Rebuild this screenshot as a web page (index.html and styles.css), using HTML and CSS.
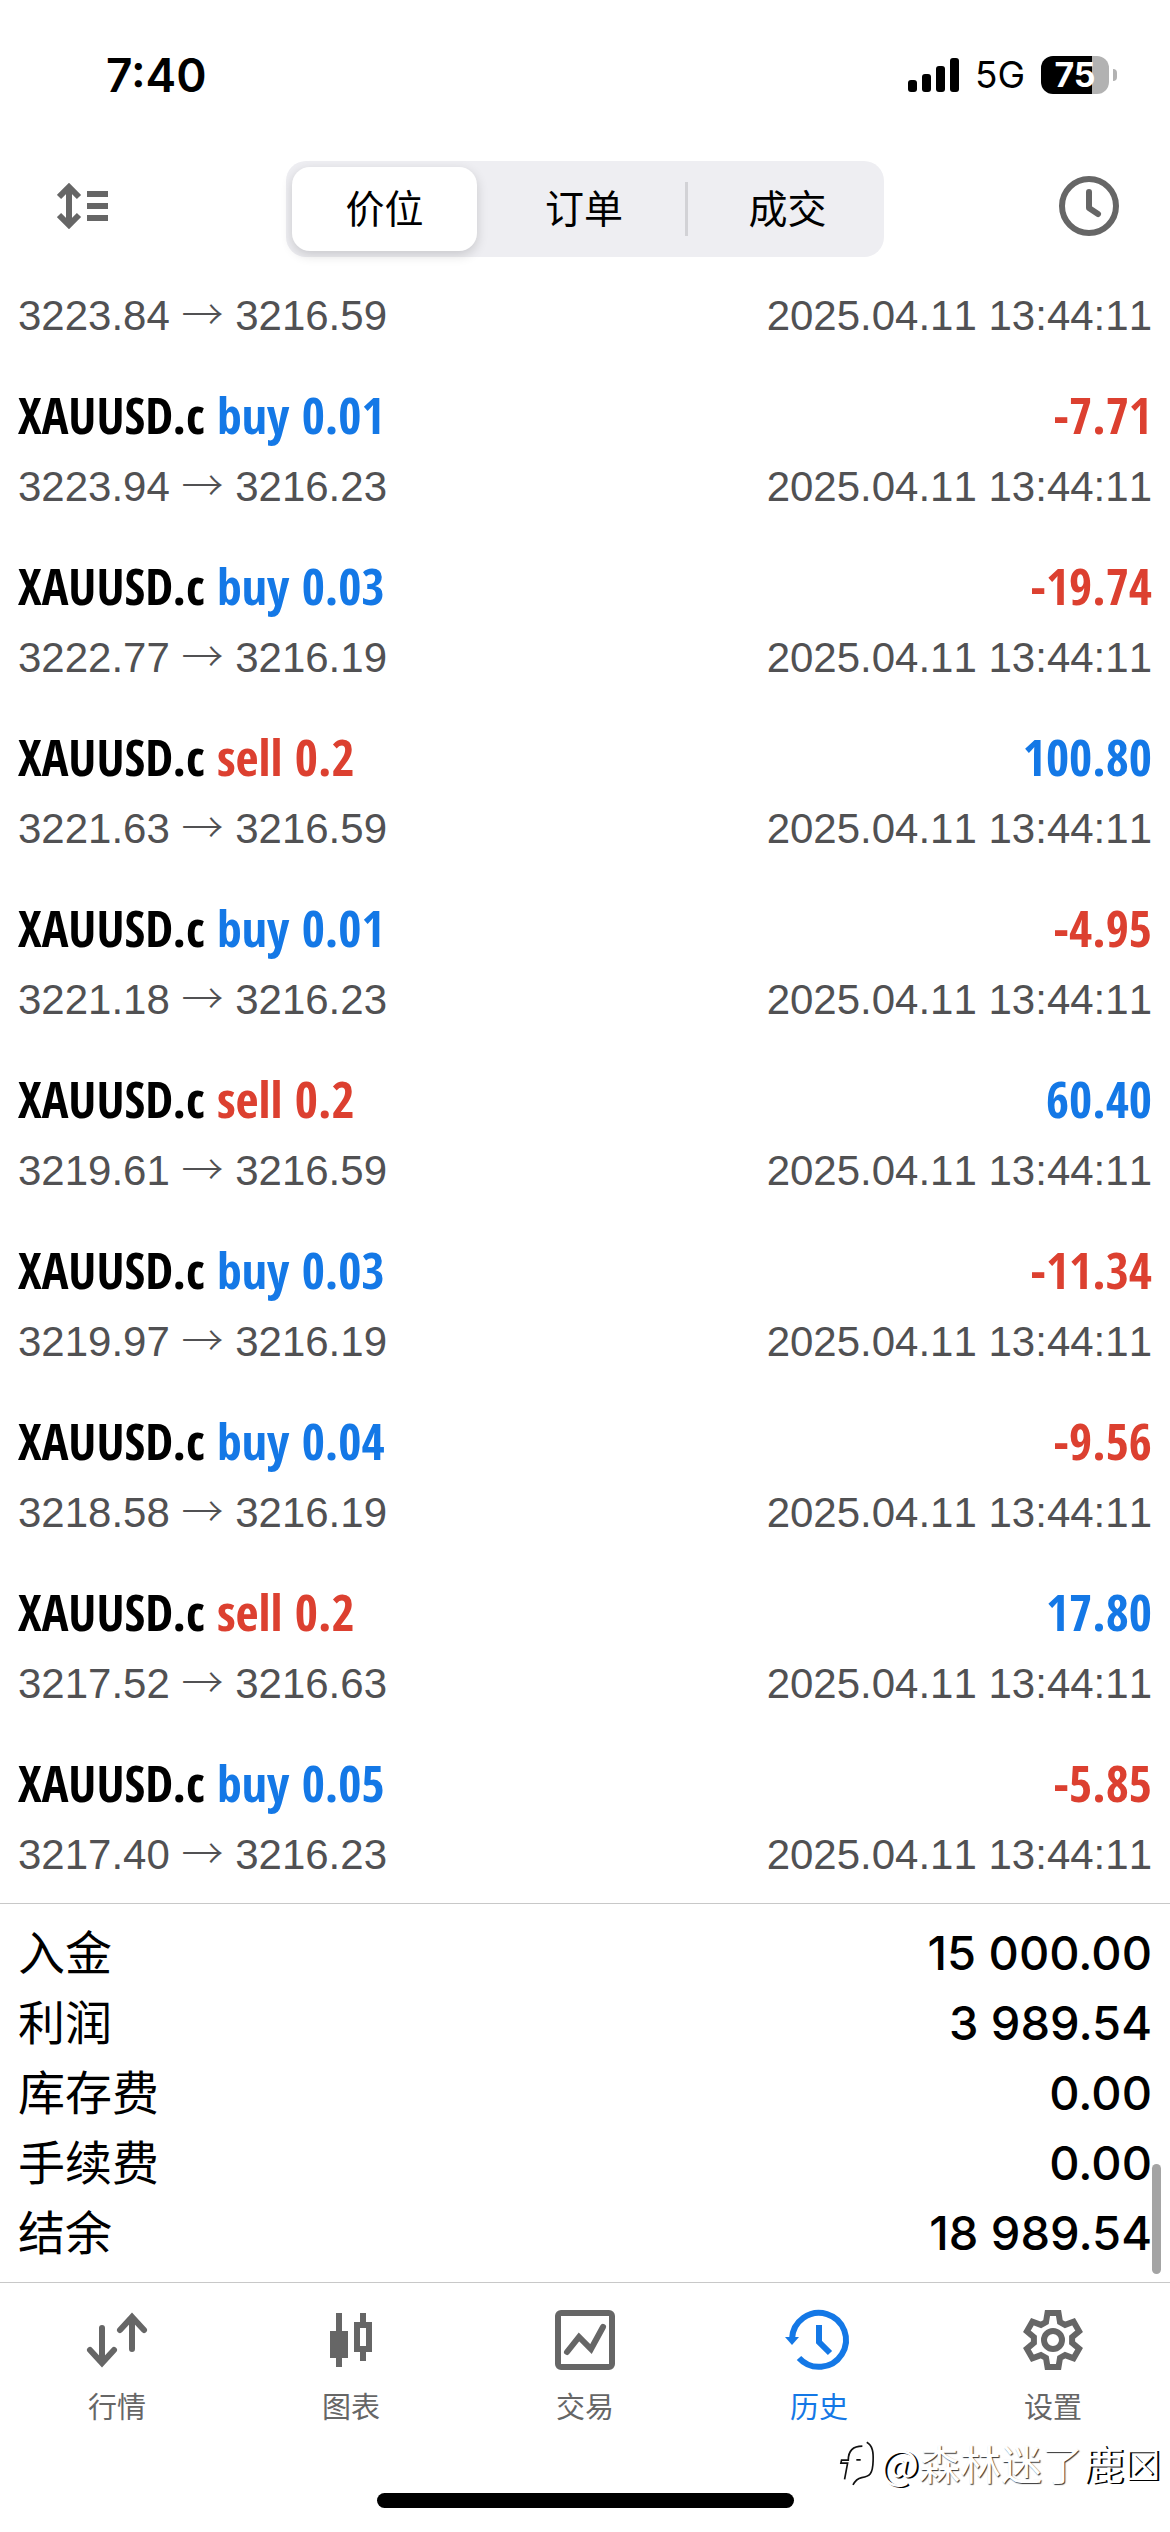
FILE: index.html
```html
<!DOCTYPE html>
<html lang="zh-CN">
<head>
<meta charset="utf-8">
<meta name="viewport" content="width=device-width">
<title>历史</title>
<link rel="stylesheet" href="styles.css">
</head>
<body>
<div class="app">
  <div class="status">
    <time class="clock">7:40</time>
    <div class="status-right">
      <svg class="signal" viewBox="0 0 51 34" aria-hidden="true">
        <rect x="0" y="22" width="9" height="12" rx="3"/>
        <rect x="14" y="16" width="9" height="18" rx="3"/>
        <rect x="28" y="8" width="9" height="26" rx="3"/>
        <rect x="42" y="0" width="9" height="34" rx="3"/>
      </svg>
      <span class="network">5G</span>
      <span class="battery">75</span>
      <span class="battery-tip"></span>
    </div>
  </div>

  <header class="toolbar">
    <button class="icon-button" type="button" aria-label="排序">
      <svg class="sort-icon" viewBox="0 0 51 46" aria-hidden="true">
        <path d="M12 5V41M2 14 12 4l10 10M2 32l10 10 10-10" fill="none" stroke="currentColor" stroke-width="6"/>
        <path d="M30 8h21v6H30zM30 20h21v6H30zM30 32h21v6H30z" fill="currentColor"/>
      </svg>
    </button>
    <div class="segments" role="tablist">
      <button class="segment selected" type="button" role="tab" aria-selected="true">价位</button>
      <button class="segment" type="button" role="tab" aria-selected="false">订单</button>
      <button class="segment divided" type="button" role="tab" aria-selected="false">成交</button>
    </div>
    <button class="icon-button end" type="button" aria-label="时间段">
      <svg class="icon" viewBox="0 0 60 60" fill="none" stroke="currentColor" stroke-width="6" aria-hidden="true">
        <circle cx="30" cy="30" r="27"/>
        <path d="M30 16v16l9 6" stroke-linecap="round" stroke-linejoin="round"/>
      </svg>
    </button>
  </header>

  <ul class="deals">
    <li class="deal"><div class="detail"><span>3223.84 <span class="arrow">→</span> 3216.59</span><time>2025.04.11 13:44:11</time></div></li>
    <li class="deal"><div class="title"><span>XAUUSD.c <span class="blue">buy 0.01</span></span><span class="red">-7.71</span></div><div class="detail"><span>3223.94 <span class="arrow">→</span> 3216.23</span><time>2025.04.11 13:44:11</time></div></li>
    <li class="deal"><div class="title"><span>XAUUSD.c <span class="blue">buy 0.03</span></span><span class="red">-19.74</span></div><div class="detail"><span>3222.77 <span class="arrow">→</span> 3216.19</span><time>2025.04.11 13:44:11</time></div></li>
    <li class="deal"><div class="title"><span>XAUUSD.c <span class="red">sell 0.2</span></span><span class="blue">100.80</span></div><div class="detail"><span>3221.63 <span class="arrow">→</span> 3216.59</span><time>2025.04.11 13:44:11</time></div></li>
    <li class="deal"><div class="title"><span>XAUUSD.c <span class="blue">buy 0.01</span></span><span class="red">-4.95</span></div><div class="detail"><span>3221.18 <span class="arrow">→</span> 3216.23</span><time>2025.04.11 13:44:11</time></div></li>
    <li class="deal"><div class="title"><span>XAUUSD.c <span class="red">sell 0.2</span></span><span class="blue">60.40</span></div><div class="detail"><span>3219.61 <span class="arrow">→</span> 3216.59</span><time>2025.04.11 13:44:11</time></div></li>
    <li class="deal"><div class="title"><span>XAUUSD.c <span class="blue">buy 0.03</span></span><span class="red">-11.34</span></div><div class="detail"><span>3219.97 <span class="arrow">→</span> 3216.19</span><time>2025.04.11 13:44:11</time></div></li>
    <li class="deal"><div class="title"><span>XAUUSD.c <span class="blue">buy 0.04</span></span><span class="red">-9.56</span></div><div class="detail"><span>3218.58 <span class="arrow">→</span> 3216.19</span><time>2025.04.11 13:44:11</time></div></li>
    <li class="deal"><div class="title"><span>XAUUSD.c <span class="red">sell 0.2</span></span><span class="blue">17.80</span></div><div class="detail"><span>3217.52 <span class="arrow">→</span> 3216.63</span><time>2025.04.11 13:44:11</time></div></li>
    <li class="deal"><div class="title"><span>XAUUSD.c <span class="blue">buy 0.05</span></span><span class="red">-5.85</span></div><div class="detail"><span>3217.40 <span class="arrow">→</span> 3216.23</span><time>2025.04.11 13:44:11</time></div></li>
  </ul>

  <dl class="summary">
    <div class="sum-row"><dt>入金</dt><dd>15 000.00</dd></div>
    <div class="sum-row"><dt>利润</dt><dd>3 989.54</dd></div>
    <div class="sum-row"><dt>库存费</dt><dd>0.00</dd></div>
    <div class="sum-row"><dt>手续费</dt><dd>0.00</dd></div>
    <div class="sum-row"><dt>结余</dt><dd>18 989.54</dd></div>
    <div class="scroll-thumb"></div>
  </dl>

  <nav class="tabs">
    <a class="tab" href="#quotes">
      <svg class="icon" viewBox="0 0 60 60" fill="none" stroke="currentColor" stroke-width="6" stroke-linecap="round" aria-hidden="true">
        <path d="M15 18v34M3 40l12 13 12-13M45 39V8M33 20 45 7l12 13"/>
      </svg>
      <span>行情</span>
    </a>
    <a class="tab" href="#chart">
      <svg class="icon" viewBox="0 0 60 60" fill="currentColor" aria-hidden="true">
        <path d="M15 3h6v18h6v27h-6v9h-6v-9H9V21h6z"/>
        <path fill-rule="evenodd" d="M39 3h6v9h6v30h-6v9h-6v-9h-6V12h6zM39 18v18h6V18z"/>
      </svg>
      <span>图表</span>
    </a>
    <a class="tab" href="#trade">
      <svg class="icon" viewBox="0 0 60 60" fill="none" stroke="currentColor" stroke-width="6" aria-hidden="true">
        <rect x="3" y="3" width="54" height="54" rx="3"/>
        <path d="M12 42l12-15 12 12 12-22" stroke-linecap="round"/>
      </svg>
      <span>交易</span>
    </a>
    <a class="tab active" href="#history" aria-current="page">
      <svg class="icon" viewBox="0 0 60 60" fill="none" stroke="currentColor" stroke-width="6" aria-hidden="true">
        <path d="M3 29A27 27 0 1 1 10 48M30 15v17l11 11"/>
        <path d="M-4 27h14l-7 8z" fill="currentColor" stroke="none"/>
      </svg>
      <span>历史</span>
    </a>
    <a class="tab" href="#settings">
      <svg class="icon" viewBox="-30 -30 60 60" fill="none" stroke="currentColor" stroke-width="6" aria-hidden="true">
        <circle r="9"/>
        <path d="M-7-18-5.500-27H5.500L7-18 12.100-15.100 20.600-18.300 26.100-8.700 19.100-2.900V2.900L26.100 8.700 20.600 18.300 12.100 15.100 7 18 5.500 27H-5.500L-7 18-12.100 15.100-20.600 18.300-26.100 8.700-19.100 2.900V-2.900L-26.100-8.700-20.600-18.300-12.100-15.100Z"/>
      </svg>
      <span>设置</span>
    </a>
  </nav>
  <div class="home-bar"></div>

  <div class="watermark">
    <svg class="mark" viewBox="50 50 110 140" fill="none" stroke="#111" stroke-width="5" aria-hidden="true">
      <path d="M68 170 77 122H57l2-9h20c0-28 12-42 42-42M103 112h13M134 60c18 10 20 30 19 55-1 40-10 46-34 50-14 3-20 10-26 22"/>
    </svg>
    <span class="strong">@</span><span>森林迷了</span><span class="strong">鹿☒</span>
  </div>
</div>
</body>
</html>
```
FILE: styles.css
```css
* {
  box-sizing: border-box;
}

body {
  margin: 0;
  background: #fff;
  color: #000;
  font-family: Inter, "Noto Sans CJK SC", sans-serif;
}

button {
  border: 0;
  padding: 0;
  background: none;
  color: inherit;
  font: inherit;
}

.app {
  position: relative;
  display: flex;
  flex-direction: column;
  min-height: 100vh;
}

.icon {
  display: block;
  width: 60px;
  height: 60px;
  overflow: visible;
}

/* Status bar */
.status {
  display: flex;
  align-items: center;
  justify-content: space-between;
  padding: 46px 53px 0 106px;
  line-height: 58px;
}

.clock {
  font-size: 46px;
  font-weight: 600;
}

.status-right {
  display: flex;
  align-items: center;
}

.signal {
  width: 51px;
  height: 34px;
}

.network {
  margin: 0 16px;
  font-size: 37px;
}

.battery {
  width: 68px;
  border-radius: 12px;
  background: linear-gradient(90deg, #000 75%, #b2b2b2 75%);
  color: #fff;
  font-size: 34px;
  font-weight: 700;
  line-height: 38px;
  text-align: center;
}

.battery-tip {
  width: 4px;
  height: 12px;
  margin-left: 4px;
  border-radius: 0 4px 4px 0;
  background: #b2b2b2;
}

/* Toolbar */
.toolbar {
  display: grid;
  grid-template-columns: 1fr 56% 1fr;
  padding: 57px 51px 24px;
}

.icon-button {
  display: flex;
  align-items: center;
  height: 90px;
  padding-left: 6px;
  color: #666;
}

.icon-button.end {
  justify-content: flex-end;
}

.sort-icon {
  width: 51px;
  height: 46px;
}

.segments {
  display: grid;
  grid-template-columns: 185fr 208fr 199fr;
  height: 96px;
  padding: 6px 0 6px 6px;
  border-radius: 20px;
  background: #eeeef2;
}

.segment {
  padding-left: 6px;
  font-size: 39px;
  line-height: 80px;
}

.segment.selected {
  padding-left: 0;
  border-radius: 18px;
  background: #fff;
  box-shadow: 0 4px 12px rgba(0, 0, 0, 0.16);
}

.segment.divided {
  background: linear-gradient(#d2d2d6, #d2d2d6) left center / 3px 54px no-repeat;
}

/* Deal list */
.deals {
  display: flex;
  flex-direction: column;
  gap: 31px;
  margin: 0;
  padding: 0 18px 13px;
  list-style: none;
}

.title,
.detail {
  display: flex;
  justify-content: space-between;
}

.title {
  margin-bottom: 4px;
  font-family: "Open Sans Condensed", "Roboto Condensed", sans-serif;
  font-size: 50px;
  font-weight: 700;
  line-height: 66px;
}

.detail {
  color: #515153;
  font-family: "Liberation Sans", Arial, sans-serif;
  font-size: 42px;
  font-kerning: none;
  line-height: 70px;
}

.arrow {
  font-family: "Noto Sans CJK SC", sans-serif;
  font-weight: 300;
  line-height: 1;
}

.blue {
  color: #1478e6;
}

.red {
  color: #dc4030;
}

/* Totals */
.summary {
  position: relative;
  margin: 0;
  padding: 14px 18px;
  border: solid #c8c8c8;
  border-width: 1px 0;
}

.sum-row {
  display: flex;
  justify-content: space-between;
  font-size: 47px;
  line-height: 70px;
}

.sum-row dd {
  margin: 0;
  font-weight: 500;
}

.scroll-thumb {
  position: absolute;
  right: 9px;
  bottom: 8px;
  width: 9px;
  height: 110px;
  border-radius: 5px;
  background: #a4a4a4;
}

/* Bottom navigation */
.tabs {
  display: flex;
  padding-top: 27px;
}

.tab {
  display: flex;
  flex: 1;
  flex-direction: column;
  align-items: center;
  gap: 18px;
  color: #666;
  font-size: 29px;
  line-height: 40px;
  text-decoration: none;
}

.tab.active {
  color: #1478e6;
}

.home-bar {
  width: 417px;
  height: 15px;
  margin: auto auto 24px;
  border-radius: 8px;
  background: #000;
}

.watermark {
  position: absolute;
  right: 9px;
  bottom: 40px;
  display: flex;
  align-items: center;
  color: #fff;
  font-family: "Noto Sans CJK SC", sans-serif;
  font-size: 41px;
  line-height: 60px;
  text-shadow: 1px 1px 1px #333;
}

.strong {
  text-shadow: 2px 1px 0 #000;
}

.mark {
  width: 40px;
  height: 47px;
  margin-right: 3px;
}
```
